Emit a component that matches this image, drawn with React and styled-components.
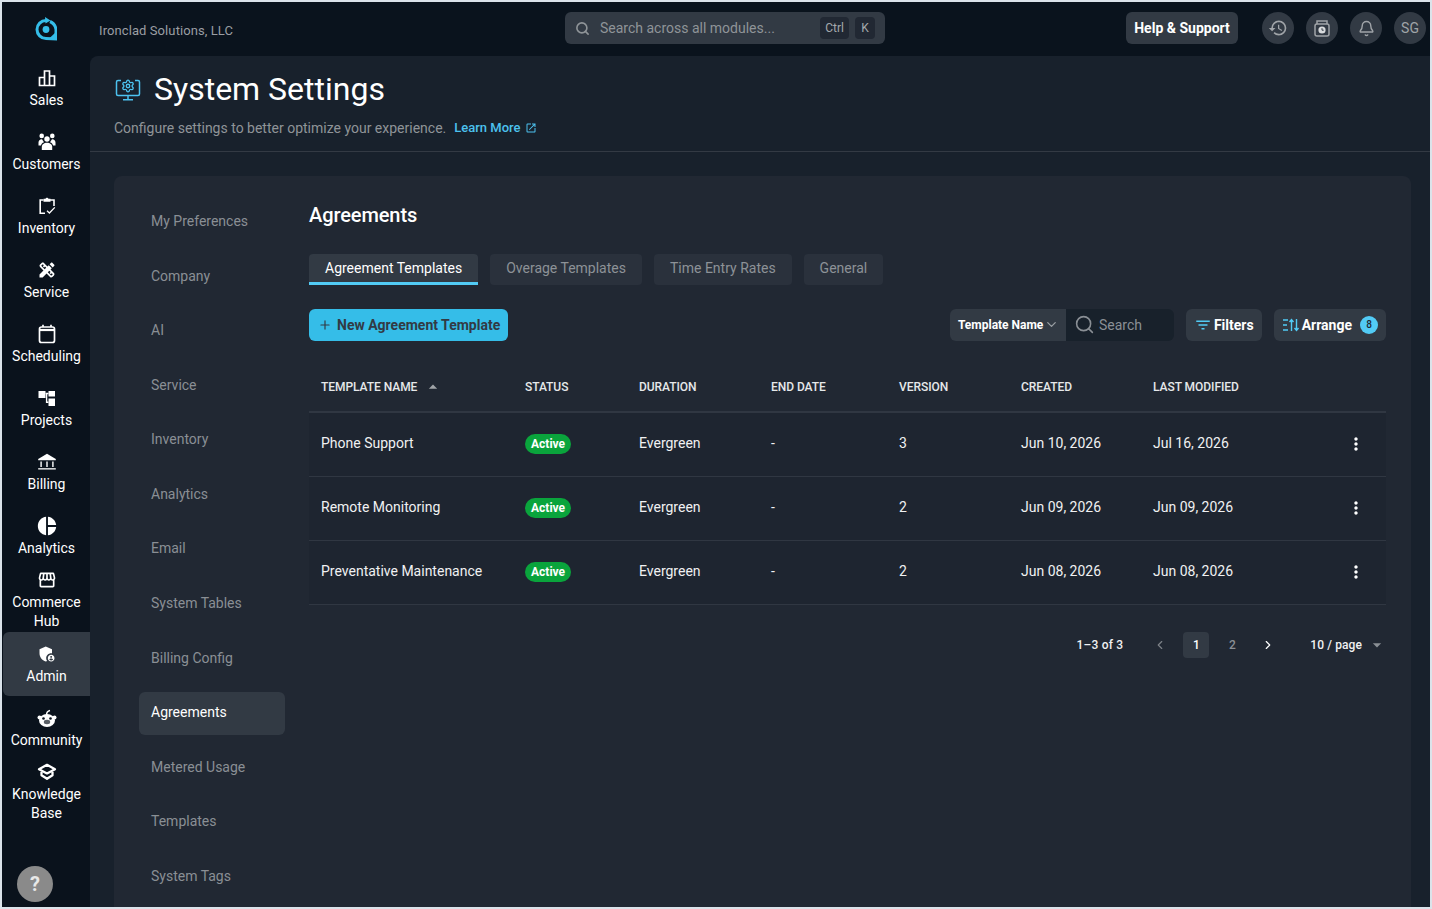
import React from 'react'
import styled, { createGlobalStyle } from 'styled-components'
import { Search, Bell, Plus, ChevronDown, ChevronLeft, ChevronRight, Settings } from 'lucide-react'
import {
  MdDesignServices,
  MdPieChart,
  MdOutlineStorefront,
  MdAdminPanelSettings,
  MdHistory,
  MdFilterList,
  MdMoreVert,
  MdOutlineOpenInNew,
  MdArrowDropUp,
  MdArrowDropDown
} from 'react-icons/md'

// Data ====================================
const SalesIcon = () => (
  <svg width="20" height="20" viewBox="0 0 20 20" fill="none" stroke="currentColor" strokeWidth="1.7">
    <path d="M2.5 17.5V9.5H7.5V17.5ZM7.5 17.5V3H12.5V17.5ZM12.5 17.5V8H17.5V17.5Z" />
  </svg>
)

const CustomersIcon = () => (
  <svg width="20" height="20" viewBox="0 0 20 20" fill="currentColor">
    <circle cx="4.7" cy="3.9" r="2.3" />
    <circle cx="15.3" cy="3.9" r="2.3" />
    <circle cx="10" cy="7" r="2.7" />
    <path d="M1.500 13.500V10.500C1.500 8.500 3 7 5 7.200C5.800 8.400 6.200 9.300 7 10.300C5.200 11 4.300 12 4 13.500Z" />
    <path d="M18.500 13.500V10.500C18.500 8.500 17 7 15 7.200C14.200 8.400 13.800 9.300 13 10.300C14.800 11 15.700 12 16 13.500Z" />
    <path d="M4.800 18V15C4.800 12.500 7 10.800 10 10.800C13 10.800 15.200 12.500 15.200 15V18Z" />
  </svg>
)

const InventoryIcon = () => (
  <svg width="20" height="20" viewBox="0 0 20 20" fill="none" stroke="currentColor" strokeWidth="1.6">
    <path d="M8 17.200H3.200V4H6.500M13 4H17V10" />
    <path d="M6.500 5.800V2.700H8.600C8.900 1.300 11.100 1.300 11.400 2.700H13.500V5.800Z" fill="currentColor" stroke="none" />
    <path d="M10 14.800L12.400 17L17.800 11.400" strokeWidth="1.3" />
  </svg>
)

const CalendarIcon = () => (
  <svg width="20" height="20" viewBox="0 0 20 20" fill="none" stroke="currentColor" strokeWidth="1.7">
    <rect x="2.500" y="3" width="15" height="15.500" rx="2" />
    <path d="M2.500 6H17.500" strokeWidth="2.200" />
    <path d="M6 0.800V3M14 0.800V3" />
  </svg>
)

const ProjectsIcon = () => (
  <svg width="20" height="20" viewBox="0 0 20 20" fill="currentColor">
    <rect x="1.500" y="3" width="7" height="7" />
    <rect x="11.500" y="3" width="6.500" height="5.500" />
    <rect x="11.500" y="10.500" width="6.500" height="7.500" />
    <path d="M8.500 4.800H11.500V6.200H10.300V13.500H11.500V14.900H8.900V6.200H8.500Z" />
  </svg>
)

const BillingIcon = () => (
  <svg width="20" height="20" viewBox="0 0 20 20" fill="currentColor">
    <path d="M10 1.800L18.800 7V8.200H1.200V7Z" />
    <rect x="3.400" y="9.500" width="1.400" height="5.500" />
    <rect x="9.300" y="9.500" width="1.400" height="5.500" />
    <rect x="15.200" y="9.500" width="1.400" height="5.500" />
    <rect x="1.200" y="16.200" width="17.600" height="1.300" />
  </svg>
)

const CommunityIcon = () => (
  <svg width="20" height="20" viewBox="0 0 20 20">
    <path d="M9.500 7C9.500 4.500 11 3 13 2.500" fill="none" stroke="#fff" strokeWidth="1.400" />
    <circle cx="2.500" cy="9.500" r="2" fill="#fff" />
    <circle cx="17.500" cy="9.500" r="2" fill="#fff" />
    <ellipse cx="10" cy="12.500" rx="8" ry="6.500" fill="#fff" />
    <circle cx="6.500" cy="10.500" r="1.300" fill="#0a121c" />
    <circle cx="13.500" cy="10.500" r="1.300" fill="#0a121c" />
    <ellipse cx="10" cy="14" rx="3.200" ry="2.200" fill="#5a5f66" />
  </svg>
)

const KnowledgeIcon = () => (
  <svg width="20" height="20" viewBox="0 0 20 20" fill="none" stroke="currentColor" strokeWidth="2.300" strokeLinejoin="round">
    <path d="M10 2.800L18 7.200L10 11.400L2 7.200Z" />
    <path d="M4.500 10V13.200L10 16.800L15.500 13.200V10" />
  </svg>
)

const navItems = [
  { label: 'Sales', icon: <SalesIcon /> },
  { label: 'Customers', icon: <CustomersIcon /> },
  { label: 'Inventory', icon: <InventoryIcon /> },
  { label: 'Service', icon: <MdDesignServices size={20} /> },
  { label: 'Scheduling', icon: <CalendarIcon /> },
  { label: 'Projects', icon: <ProjectsIcon /> },
  { label: 'Billing', icon: <BillingIcon /> },
  { label: 'Analytics', icon: <MdPieChart size={22} /> },
  { label: 'Commerce Hub', icon: <MdOutlineStorefront size={20} /> },
  { label: 'Admin', icon: <MdAdminPanelSettings size={20} />, active: true },
  { label: 'Community', icon: <CommunityIcon /> },
  { label: 'Knowledge Base', icon: <KnowledgeIcon /> }
]

const settingsItems = [
  'My Preferences',
  'Company',
  'AI',
  'Service',
  'Inventory',
  'Analytics',
  'Email',
  'System Tables',
  'Billing Config',
  'Agreements',
  'Metered Usage',
  'Templates',
  'System Tags'
]

const tabs = ['Agreement Templates', 'Overage Templates', 'Time Entry Rates', 'General']

const rows = [
  { name: 'Phone Support', version: '3', created: 'Jun 10, 2026', modified: 'Jul 16, 2026' },
  { name: 'Remote Monitoring', version: '2', created: 'Jun 09, 2026', modified: 'Jun 09, 2026' },
  { name: 'Preventative Maintenance', version: '2', created: 'Jun 08, 2026', modified: 'Jun 08, 2026' }
]

// Styles ==================================
const GlobalStyle = createGlobalStyle`
  html, body {
    margin: 0;
    height: 100%;
    overflow: hidden;
  }
  body {
    font-family: Roboto, "Liberation Sans", sans-serif;
    background: #dbe3ea;
  }
  * { box-sizing: border-box; }
`

const Frame = styled.div`
  width: 1432px;
  height: 909px;
  padding: 2px;
  background: #dbe3ea;
`

const Shell = styled.div`
  display: flex;
  width: 100%;
  height: 100%;
  overflow: hidden;
  background: #0a131d;
`

const Rail = styled.nav`
  display: flex;
  flex-direction: column;
  flex: 0 0 88px;
  padding-bottom: 5px;
  background: #0a121c;
`

const LogoSlot = styled.div`
  display: flex;
  justify-content: center;
  height: 54px;
  padding-top: 15px;
`

const RailItem = styled.a`
  display: flex;
  flex-direction: column;
  align-items: center;
  justify-content: center;
  height: 64px;
  padding-top: 1px;
  margin-left: 1px;
  color: #fff;
  font-size: 14px;
  line-height: 19px;
  text-align: center;
  border-radius: 6px 0 0 6px;
  background: ${p => (p.$active ? '#323a44' : 'transparent')};
`

const RailIcon = styled.span`
  display: flex;
  align-items: center;
  justify-content: center;
  height: 20px;
  margin-bottom: 3px;
`

const RailLabel = styled.span`
  display: block;
  width: 76px;
`

const HelpBubble = styled.div`
  display: flex;
  align-items: center;
  justify-content: center;
  width: 36px;
  height: 36px;
  margin: auto 0 0 15px;
  border-radius: 50%;
  background: #8a8a8a;
  color: #e8e8e8;
  font-size: 20px;
  font-weight: 700;
`

const Workspace = styled.div`
  display: flex;
  flex-direction: column;
  flex: 1;
  min-width: 0;
`

const TopBar = styled.header`
  display: flex;
  align-items: center;
  flex: 0 0 54px;
  padding: 0 4px 2px 9px;
  background: #0a131d;
`

const Company = styled.div`
  flex: 0 0 466px;
  padding-top: 5px;
  font-size: 13px;
  letter-spacing: 0.09px;
  color: #9a9ea3;
`

const GlobalSearch = styled.div`
  display: flex;
  align-items: center;
  width: 320px;
  height: 32px;
  padding: 0 10px;
  border-radius: 6px;
  background: #323a44;
  color: #8f9498;
  font-size: 14px;
`

const SearchText = styled.span`
  flex: 1;
  margin-left: 10px;
`

const KeyChip = styled.span`
  display: flex;
  align-items: center;
  justify-content: center;
  height: 22px;
  padding: 0 5px;
  margin-left: 6px;
  min-width: 20px;
  border-radius: 4px;
  background: #212833;
  color: #a4a8ac;
  font-size: 12px;
`

const TopActions = styled.div`
  display: flex;
  align-items: center;
  gap: 12px;
  margin-left: auto;
`

const HelpButton = styled.button`
  width: 112px;
  height: 32px;
  margin-right: 12px;
  padding: 0;
  border: 0;
  border-radius: 6px;
  background: #323a44;
  color: #fff;
  font: 700 14px Roboto, sans-serif;
`

const RoundButton = styled.div`
  display: flex;
  align-items: center;
  justify-content: center;
  width: 32px;
  height: 32px;
  border-radius: 50%;
  background: #323a44;
  color: #a0a4a8;
  font-size: 14px;
`

const Main = styled.main`
  flex: 1;
  min-height: 0;
  border-radius: 8px 0 0 0;
  background: #18212c;
  overflow: hidden;
`

const PageHeader = styled.div`
  height: 96px;
  padding: 15px 24px 0;
  border-bottom: 1px solid #333a44;
`

const TitleRow = styled.div`
  display: flex;
  align-items: center;
  height: 37px;
`

const TitleIcon = styled.span`
  display: flex;
  margin-left: 1px;
`

const PageTitle = styled.h1`
  margin: 0 0 0 13px;
  font-size: 32px;
  line-height: 37px;
  font-weight: 400;
  color: #fff;
`

const SubRow = styled.div`
  display: flex;
  align-items: center;
  margin-top: 11px;
  font-size: 14px;
  line-height: 18px;
  color: #8f9498;
`

const LearnMore = styled.a`
  display: flex;
  align-items: center;
  gap: 4px;
  margin-left: 8px;
  font-size: 13px;
  font-weight: 500;
  color: #4cc2ef;
`

const Card = styled.section`
  display: flex;
  height: 760px;
  margin: 24px 19px 0 24px;
  padding: 24.500px 25px 0;
  border-radius: 8px 8px 0 0;
  background: #212833;
`

const SettingsNav = styled.div`
  display: flex;
  flex-direction: column;
  gap: 11.580px;
  flex: 0 0 146px;
`

const SettingsItem = styled.a`
  display: flex;
  align-items: center;
  flex: 0 0 43px;
  padding: 0 0 2px 12px;
  border-radius: 6px;
  font-size: 14px;
  color: ${p => (p.$active ? '#fff' : '#8a8f95')};
  background: ${p => (p.$active ? '#323a44' : 'transparent')};
`

const Content = styled.div`
  flex: 1;
  min-width: 0;
  margin-left: 24px;
  margin-top: -1.500px;
`

const SectionTitle = styled.h2`
  margin: 3px 0 0;
  font-size: 20px;
  line-height: 26px;
  font-weight: 500;
  letter-spacing: -0.1px;
  color: #fff;
`

const TabRow = styled.div`
  display: flex;
  gap: 12px;
  margin-top: 25.500px;
`

const Tab = styled.button`
  height: 31px;
  padding: 0 16px;
  border: 0;
  border-bottom: 3px solid ${p => (p.$active ? '#52cbf5' : 'transparent')};
  border-radius: ${p => (p.$active ? '4px 4px 0 0' : '4px')};
  background: ${p => (p.$active ? '#323a44' : '#2a313c')};
  color: ${p => (p.$active ? '#fff' : '#8d9297')};
  font: 400 14px Roboto, sans-serif;
`

const ToolRow = styled.div`
  display: flex;
  align-items: center;
  margin-top: 24px;
`

const PrimaryButton = styled.button`
  display: flex;
  align-items: center;
  gap: 5px;
  height: 32px;
  padding: 0 8px 0 9px;
  border: 0;
  border-radius: 6px;
  background: #35bde8;
  color: #323a44;
  font: 700 14px Roboto, sans-serif;
`

const ToolGroup = styled.div`
  display: flex;
  align-items: center;
  margin-left: auto;
`

const FieldSelect = styled.div`
  display: flex;
  align-items: center;
  justify-content: space-between;
  width: 116px;
  height: 32px;
  padding: 0 7px 0 8px;
  border-radius: 6px 0 0 6px;
  background: #323a44;
  color: #fff;
  font-size: 12px;
  font-weight: 700;
`

const FieldSearch = styled.div`
  display: flex;
  align-items: center;
  gap: 4px;
  width: 108px;
  height: 32px;
  padding-left: 8px;
  border-radius: 0 6px 6px 0;
  background: #18212b;
  color: #8a8f95;
  font-size: 14px;
`

const ToolButton = styled.div`
  display: flex;
  align-items: center;
  gap: 2px;
  height: 32px;
  margin-left: 12px;
  padding: 0 8px;
  border-radius: 6px;
  background: #323a44;
  color: #fff;
  font-size: 14px;
  font-weight: 700;
`

const CountBadge = styled.span`
  display: flex;
  align-items: center;
  justify-content: center;
  width: 18px;
  height: 18px;
  margin-left: 6px;
  border-radius: 50%;
  background: #52cbf5;
  color: #212833;
  font-size: 10px;
  font-weight: 500;
`

const tableColumns = '204px 114px 132px 128px 122px 132px 1fr 60px'

const HeadRow = styled.div`
  display: grid;
  grid-template-columns: ${tableColumns};
  align-items: center;
  height: 49px;
  margin-top: 23px;
  border-bottom: 2px solid #303742;
  color: #e6e8ea;
  font-size: 12px;
  font-weight: 500;
  letter-spacing: -0.05px;
`

const HeadCell = styled.div`
  display: flex;
  align-items: center;
  padding-left: 12px;
`

const SortCaret = styled.span`
  display: flex;
  margin-left: 6px;
  color: #a0a4a8;
`

const BodyRow = styled.div`
  display: grid;
  grid-template-columns: ${tableColumns};
  align-items: center;
  height: 64px;
  padding-bottom: 2px;
  border-bottom: 1px solid #303742;
  background: #1e2530;
  color: #f0f1f2;
  font-size: 14px;
`

const Cell = styled.div`
  padding-left: 12px;
`

const PillCell = styled(Cell)`
  display: flex;
  padding-top: 2px;
`

const StatusPill = styled.span`
  display: inline-flex;
  align-items: center;
  height: 20px;
  padding: 0 6px;
  border-radius: 10px;
  background: #0aa43c;
  color: #fff;
  font-size: 12px;
  font-weight: 700;
`

const RowMenu = styled.div`
  display: flex;
  justify-content: center;
  padding-top: 2px;
  color: #fff;
`

const Pager = styled.div`
  display: flex;
  align-items: center;
  height: 26px;
  margin-top: 27px;
  color: #f0f1f2;
  font-size: 12px;
  font-weight: 500;
`

const PagerCount = styled.span`
  margin-left: auto;
  margin-right: 29px;
  letter-spacing: 0.2px;
`

const PagerArrow = styled.span`
  display: flex;
  justify-content: center;
  width: 16px;
  margin-left: ${p => p.$gap || 0}px;
  color: ${p => (p.$muted ? '#7d8288' : '#fff')};
`

const PageNumber = styled.span`
  display: flex;
  align-items: center;
  justify-content: center;
  width: 26px;
  height: 26px;
  margin-left: ${p => p.$gap}px;
  border-radius: 4px;
  background: ${p => (p.$active ? '#323a44' : 'transparent')};
  color: ${p => (p.$active ? '#fff' : '#8a8f95')};
`

const PageSize = styled.span`
  display: flex;
  align-items: center;
  margin-left: 34px;
  letter-spacing: 0.1px;
`

const SizeCaret = styled.span`
  display: flex;
  margin-left: 5px;
  margin-right: -1px;
  color: #8a8f95;
`

// Logos and one-off drawings ==============
const Logo = () => (
  <svg width="22" height="24" viewBox="0 0 22 24" fill="none">
    <path
      d="M11 3.500A9 9 0 1 0 11 21.500L21 22V12.500A10 10 0 0 0 15 4.500"
      stroke="#35bde8"
      strokeWidth="3"
    />
    <path d="M10 0L15.500 3.600L10.500 6.500Z" fill="#35bde8" />
    <path d="M21 15V22.500H13Z" fill="#35bde8" />
    <circle cx="11" cy="12.500" r="3.400" fill="#35bde8" />
  </svg>
)

const SystemIcon = () => (
  <svg width="26" height="26" viewBox="0 0 26 26" fill="none" stroke="#4cc2ef" strokeWidth="1.500">
    <path d="M6 3.500H3A1.500 1.500 0 0 0 1.500 5V17A1.500 1.500 0 0 0 3 18.500H23A1.500 1.500 0 0 0 24.500 17V5A1.500 1.500 0 0 0 23 3.500H20" />
    <Settings x="6" y="2" width="14" height="14" strokeWidth={2.200} color="#4cc2ef" />
    <path d="M13 18.500V22M8 22.800H18" />
  </svg>
)

const StorageClockIcon = () => (
  <svg width="18" height="18" viewBox="0 0 18 18" fill="none" stroke="currentColor" strokeWidth="1.500">
    <rect x="2" y="5" width="14" height="12" rx="2" />
    <path d="M4 5V2H14V5" />
    <circle cx="9" cy="11" r="3.600" fill="#d8dadc" stroke="none" />
    <path d="M9 9.200V11.200H10.700" stroke="#323a44" strokeWidth="1" />
  </svg>
)

const ArrangeIcon = () => (
  <svg width="18" height="16" viewBox="0 0 18 16" fill="none" stroke="#52cbf5" strokeWidth="1.400">
    <path d="M1 3H6M1 8H5M1 13H6" />
    <path d="M9.500 14V3M7.500 5L9.500 2.500L11.500 5" />
    <path d="M14.500 2V13M12.500 11L14.500 13.500L16.500 11" />
  </svg>
)

// =========================================
const App = () => (
  <Frame>
    <GlobalStyle />
    <Shell>
      <Rail>
        <LogoSlot>
          <Logo />
        </LogoSlot>
        {navItems.map(item => (
          <RailItem key={item.label} $active={item.active}>
            <RailIcon>{item.icon}</RailIcon>
            <RailLabel>{item.label}</RailLabel>
          </RailItem>
        ))}
        <HelpBubble>?</HelpBubble>
      </Rail>

      <Workspace>
        <TopBar>
          <Company>Ironclad Solutions, LLC</Company>
          <GlobalSearch>
            <Search size={15} strokeWidth={2.600} />
            <SearchText>Search across all modules...</SearchText>
            <KeyChip>Ctrl</KeyChip>
            <KeyChip>K</KeyChip>
          </GlobalSearch>
          <TopActions>
            <HelpButton>Help &amp; Support</HelpButton>
            <RoundButton>
              <MdHistory size={20} />
            </RoundButton>
            <RoundButton>
              <StorageClockIcon />
            </RoundButton>
            <RoundButton>
              <Bell size={17} />
            </RoundButton>
            <RoundButton>SG</RoundButton>
          </TopActions>
        </TopBar>

        <Main>
          <PageHeader>
            <TitleRow>
              <TitleIcon>
                <SystemIcon />
              </TitleIcon>
              <PageTitle>System Settings</PageTitle>
            </TitleRow>
            <SubRow>
              Configure settings to better optimize your experience.
              <LearnMore>
                Learn More
                <MdOutlineOpenInNew size={12} />
              </LearnMore>
            </SubRow>
          </PageHeader>

          <Card>
            <SettingsNav>
              {settingsItems.map(item => (
                <SettingsItem key={item} $active={item === 'Agreements'}>
                  {item}
                </SettingsItem>
              ))}
            </SettingsNav>

            <Content>
              <SectionTitle>Agreements</SectionTitle>
              <TabRow>
                {tabs.map((tab, i) => (
                  <Tab key={tab} $active={i === 0}>
                    {tab}
                  </Tab>
                ))}
              </TabRow>

              <ToolRow>
                <PrimaryButton>
                  <Plus size={14} />
                  New Agreement Template
                </PrimaryButton>
                <ToolGroup>
                  <FieldSelect>
                    Template Name
                    <ChevronDown size={15} color="#9a9ea3" />
                  </FieldSelect>
                  <FieldSearch>
                    <Search size={21} strokeWidth={1.800} />
                    Search
                  </FieldSearch>
                  <ToolButton>
                    <MdFilterList size={18} color="#52cbf5" />
                    Filters
                  </ToolButton>
                  <ToolButton>
                    <ArrangeIcon />
                    Arrange
                    <CountBadge>8</CountBadge>
                  </ToolButton>
                </ToolGroup>
              </ToolRow>

              <HeadRow>
                <HeadCell>
                  TEMPLATE NAME
                  <SortCaret>
                    <MdArrowDropUp size={20} />
                  </SortCaret>
                </HeadCell>
                <HeadCell>STATUS</HeadCell>
                <HeadCell>DURATION</HeadCell>
                <HeadCell>END DATE</HeadCell>
                <HeadCell>VERSION</HeadCell>
                <HeadCell>CREATED</HeadCell>
                <HeadCell>LAST MODIFIED</HeadCell>
              </HeadRow>

              {rows.map(row => (
                <BodyRow key={row.name}>
                  <Cell>{row.name}</Cell>
                  <PillCell>
                    <StatusPill>Active</StatusPill>
                  </PillCell>
                  <Cell>Evergreen</Cell>
                  <Cell>-</Cell>
                  <Cell>{row.version}</Cell>
                  <Cell>{row.created}</Cell>
                  <Cell>{row.modified}</Cell>
                  <RowMenu>
                    <MdMoreVert size={20} />
                  </RowMenu>
                </BodyRow>
              ))}

              <Pager>
                <PagerCount>1–3 of 3</PagerCount>
                <PagerArrow $muted>
                  <ChevronLeft size={14} />
                </PagerArrow>
                <PageNumber $active $gap={15}>1</PageNumber>
                <PageNumber $gap={10}>2</PageNumber>
                <PagerArrow $gap={15}>
                  <ChevronRight size={14} />
                </PagerArrow>
                <PageSize>
                  10 / page
                  <SizeCaret>
                    <MdArrowDropDown size={20} />
                  </SizeCaret>
                </PageSize>
              </Pager>
            </Content>
          </Card>
        </Main>
      </Workspace>
    </Shell>
  </Frame>
)

export default App
